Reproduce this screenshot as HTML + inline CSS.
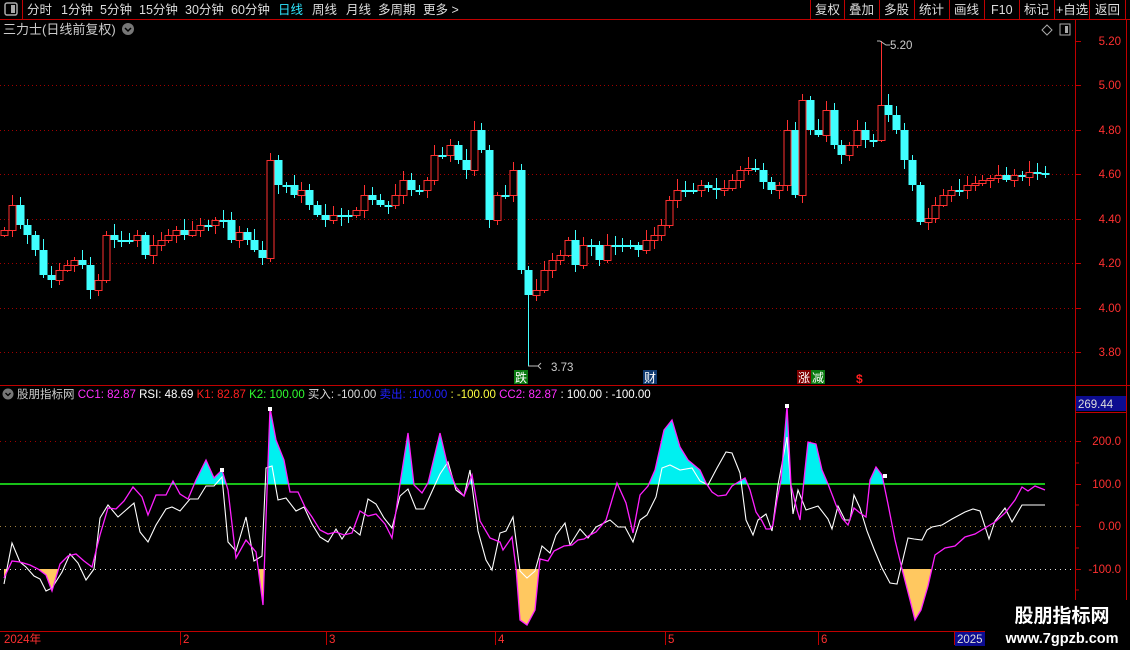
<!DOCTYPE html>
<html><head><meta charset="utf-8">
<style>
html,body{margin:0;padding:0;background:#000;width:1130px;height:650px;overflow:hidden;font-family:"Liberation Sans","Noto Sans CJK SC",sans-serif;}
svg{position:absolute;left:0;top:0}
</style></head>
<body>
<svg id="s" width="1130" height="650" xmlns="http://www.w3.org/2000/svg" font-family="Liberation Sans, Noto Sans CJK SC, sans-serif">
<defs>
<clipPath id="cu"><rect x="0" y="388" width="1075" height="96"/></clipPath>
<clipPath id="cd"><rect x="0" y="569" width="1075" height="62"/></clipPath>
</defs>
<rect width="1130" height="650" fill="#000"/>
<line x1="0" y1="19.5" x2="1130" y2="19.5" stroke="#c00000"/>
<line x1="22.5" y1="0" x2="22.5" y2="19" stroke="#c00000"/>
<rect x="5" y="3" width="12" height="12" rx="2" fill="none" stroke="#aaa" stroke-width="1.5"/>
<rect x="11" y="5" width="4" height="8" fill="#aaa"/>
<g font-size="12.5" fill="#ddd">
<text x="27" y="14">分时</text><text x="61" y="14">1分钟</text><text x="100" y="14">5分钟</text><text x="139" y="14">15分钟</text><text x="185" y="14">30分钟</text><text x="231" y="14">60分钟</text>
<text x="278" y="14" fill="#2ee6ff">日线</text><text x="312" y="14">周线</text><text x="346" y="14">月线</text><text x="378" y="14">多周期</text><text x="423" y="14">更多 &gt;</text>
</g>
<g stroke="#c00000"><line x1="810.5" y1="0" x2="810.5" y2="19"/><line x1="844.5" y1="0" x2="844.5" y2="19"/><line x1="879.5" y1="0" x2="879.5" y2="19"/><line x1="914.5" y1="0" x2="914.5" y2="19"/><line x1="949.5" y1="0" x2="949.5" y2="19"/><line x1="984.5" y1="0" x2="984.5" y2="19"/><line x1="1019.5" y1="0" x2="1019.5" y2="19"/><line x1="1054.5" y1="0" x2="1054.5" y2="19"/><line x1="1089.5" y1="0" x2="1089.5" y2="19"/><line x1="1125.5" y1="0" x2="1125.5" y2="19"/></g>
<g font-size="12.5" fill="#ddd"><text x="815" y="14">复权</text><text x="849" y="14">叠加</text><text x="884" y="14">多股</text><text x="919" y="14">统计</text><text x="954" y="14">画线</text><text x="991" y="14">F10</text><text x="1024" y="14">标记</text><text x="1056" y="14">+自选</text><text x="1095" y="14">返回</text></g>
<text x="3" y="34" font-size="13" fill="#ccc">三力士(日线前复权)</text>
<circle cx="128" cy="29" r="6" fill="#777"/><path d="M125 28l3 3 3-3" stroke="#000" stroke-width="1.5" fill="none"/>
<path d="M1047 25l5 5-5 5-5-5z" fill="none" stroke="#aaa"/>
<rect x="1060" y="24" width="10" height="11" fill="none" stroke="#aaa"/><rect x="1065" y="26" width="3" height="7" fill="#aaa"/>
<line x1="1075.5" y1="20" x2="1075.5" y2="650" stroke="#c00000"/>
<line x1="1126.5" y1="20" x2="1126.5" y2="631" stroke="#c00000"/>
<line x1="0" y1="385.5" x2="1130" y2="385.5" stroke="#c00000"/>
<line x1="0" y1="631.5" x2="1130" y2="631.5" stroke="#c00000"/>
<g id="grid" stroke="#a00000" stroke-dasharray="1 3"></g>
<g id="pl" font-size="11.5" fill="#ff3030" text-anchor="end"></g>
<g id="cd1"></g>
<path d="M538 366h-10M538 366l3-3M538 366l3 3" stroke="#bbb"/><text x="551" y="371" font-size="11.5" fill="#ccc">3.73</text>
<path d="M877 41h3l6 4h4" stroke="#bbb" fill="none"/><text x="890" y="49" font-size="11.5" fill="#ccc">5.20</text>
<rect x="514" y="370" width="14" height="14" fill="#0a7a10"/><text x="515" y="382" font-size="12" fill="#fff">跌</text>
<rect x="643" y="370" width="14" height="14" fill="#103a70"/><text x="644" y="382" font-size="12" fill="#fff">财</text>
<rect x="797" y="370" width="14" height="14" fill="#800000"/><text x="798" y="382" font-size="12" fill="#fff">涨</text>
<rect x="811" y="370" width="14" height="14" fill="#0a7a10"/><text x="812" y="382" font-size="12" fill="#fff">减</text>
<text x="856" y="383" font-size="12" fill="#ff2020" font-weight="bold">$</text>
<circle cx="8" cy="394" r="5.5" fill="#777"/><path d="M5.5 393l2.5 2.5 2.5-2.5" stroke="#000" stroke-width="1.3" fill="none"/>
<text x="17" y="398" font-size="11.5" fill="#ccc" xml:space="preserve">股朋指标网 <tspan fill="#ff30ff">CC1: 82.87</tspan> <tspan fill="#fff">RSI: 48.69</tspan> <tspan fill="#ff2020">K1: 82.87</tspan> <tspan fill="#30ff30">K2: 100.00</tspan> <tspan fill="#ddd">买入: -100.00</tspan> <tspan fill="#2020ff">卖出: :100.00</tspan> <tspan fill="#ffff40">: -100.00</tspan> <tspan fill="#ff30ff">CC2: 82.87</tspan> <tspan fill="#fff">: 100.00</tspan> <tspan fill="#fff">: -100.00</tspan></text>
<rect x="1076" y="396" width="50" height="15" fill="#0c0c90"/><text x="1078" y="408" font-size="11.5" fill="#ddd">269.44</text>
<line x1="1076" y1="412.5" x2="1126" y2="412.5" stroke="#c00000"/>
<g stroke-dasharray="1 4"><line x1="0" y1="441.5" x2="1075" y2="441.5" stroke="#a00000"/><line x1="0" y1="526.5" x2="1075" y2="526.5" stroke="#a08040"/><line x1="0" y1="569.5" x2="1075" y2="569.5" stroke="#ddd"/></g>
<line x1="0" y1="484" x2="1045" y2="484" stroke="#20ff20" stroke-width="1.5"/>
<g font-size="11.5" fill="#ff3030" text-anchor="end"><text x="1121" y="445">200.0</text><text x="1121" y="488">100.0</text><text x="1121" y="530">0.00</text><text x="1121" y="573">-100.0</text></g>
<g stroke="#c00000"><line x1="1076" y1="441.5" x2="1081" y2="441.5"/><line x1="1076" y1="484.5" x2="1081" y2="484.5"/><line x1="1076" y1="526.5" x2="1081" y2="526.5"/><line x1="1076" y1="569.5" x2="1081" y2="569.5"/><line x1="1076" y1="612.5" x2="1081" y2="612.5"/><line x1="1076" y1="463" x2="1079" y2="463"/><line x1="1076" y1="505" x2="1079" y2="505"/><line x1="1076" y1="548" x2="1079" y2="548"/><line x1="1076" y1="590" x2="1079" y2="590"/></g>
<g id="ind"></g>
<g stroke="#c00000"><line x1="180.5" y1="631" x2="180.5" y2="645"/><line x1="326.5" y1="631" x2="326.5" y2="645"/><line x1="495.5" y1="631" x2="495.5" y2="645"/><line x1="665.5" y1="631" x2="665.5" y2="645"/><line x1="818.5" y1="631" x2="818.5" y2="645"/><line x1="954.5" y1="631" x2="954.5" y2="645"/></g>
<g font-size="11.5" fill="#ff3030"><text x="4" y="643">2024年</text><text x="183" y="643">2</text><text x="329" y="643">3</text><text x="498" y="643">4</text><text x="668" y="643">5</text><text x="821" y="643">6</text></g>
<rect x="955" y="632" width="31" height="14" fill="#0c0c90"/><text x="957" y="643" font-size="11.5" fill="#ddd">2025</text>
<rect x="985" y="600" width="145" height="50" fill="#000"/>
<text x="1062" y="622" font-size="19" font-weight="bold" fill="#fff" text-anchor="middle">股朋指标网</text>
<text x="1062" y="643" font-size="14.5" fill="#fff" text-anchor="middle" font-weight="bold">www.7gpzb.com</text>
</svg>
<script>
(function(){
var NS="http://www.w3.org/2000/svg";
function el(t,a,p){var e=document.createElementNS(NS,t);for(var k in a)e.setAttribute(k,a[k]);document.getElementById(p).appendChild(e);return e;}
var levels=[[5.20,41],[5.00,85],[4.80,130],[4.60,174],[4.40,219],[4.20,263],[4.00,308],[3.80,352]];
levels.forEach(function(l){ if(l[0]<5.2) el('line',{x1:0,y1:l[1]+.5,x2:1075,y2:l[1]+.5},'grid');
 var t=el('text',{x:1121,y:l[1]+4},'pl');t.textContent=l[0].toFixed(2);
 el('line',{x1:1076,y1:l[1]+.5,x2:1081,y2:l[1]+.5,stroke:'#c00000'},'pl');});
var C=[230,205,225,235,250,275,280,270,265,260,265,290,280,235,240,240,240,235,255,245,240,235,230,235,230,225,225,220,220,240,232,240,250,258,160,185,185,195,190,205,215,220,215,215,215,210,195,200,205,205,195,180,190,190,180,155,155,145,160,170,130,150,220,195,195,170,270,295,290,270,260,255,240,265,245,245,260,245,245,245,245,250,240,235,225,200,190,190,190,185,188,190,188,180,170,168,170,182,190,185,130,195,100,130,135,110,145,155,145,130,140,140,105,115,130,160,185,222,218,205,195,190,190,185,183,180,178,175,180,175,177,172,173,173];
var n=C.length,dx=(1045-4)/(n-1),prev=235;
for(var i=0;i<n;i++){var x=Math.round(4+i*dx),c=C[i],o=prev;
 var up=c<o,tp=Math.min(o,c),bt=Math.max(o,c);if(bt-tp<2){bt=tp+2;}
 var hi=tp-3-(i*7%9),lo=bt+2+(i*5%8);
 if(i==67)lo=366; if(i==112)hi=41;
 var col=up?'#ff3030':'#40ffff';
 el('line',{x1:x+.5,y1:hi,x2:x+.5,y2:lo,stroke:col},'cd1');
 if(up) el('rect',{x:x-3,y:tp+.5,width:7,height:bt-tp,fill:'#000',stroke:col},'cd1');
 else el('rect',{x:x-3.5,y:tp,width:8,height:bt-tp,fill:col},'cd1');
 prev=c;}
function pr(a){var r=[];for(var i=0;i<a.length;i+=2)r.push([a[i],a[i+1]]);return r;}
var M=pr([4,578,12,561,20,562,30,565,38,569,46,575,52,591,60,564,68,556,76,554,84,561,92,567,100,535,108,508,116,509,124,501,133,487,142,497,148,515,156,495,166,495,173,481,180,494,188,499,196,480,206,460,214,478,222,470,228,490,236,558,246,540,256,552,263,605,266,519,270,408,276,440,284,460,290,492,298,492,305,507,312,517,320,530,328,534,336,532,344,535,352,533,360,511,368,516,376,514,385,524,392,538,400,484,408,433,414,485,422,493,428,483,440,433,448,467,456,487,464,496,472,475,480,521,490,538,500,542,503,550,512,537,516,568,520,620,527,625,535,610,540,559,548,561,554,551,564,546,572,545,578,540,584,539,590,535,596,532,606,520,617,483,626,503,633,533,640,495,648,486,655,470,664,430,672,420,680,447,688,460,700,470,706,483,712,492,718,496,726,495,732,486,740,481,745,478,750,490,756,512,762,521,766,529,770,529,773,525,777,500,781,480,787,406,791,485,797,510,800,520,805,470,808,442,816,444,822,470,828,484,833,497,836,505,842,518,848,525,854,508,860,513,866,517,870,480,876,467,882,475,888,504,895,540,902,569,910,600,915,620,921,610,928,586,935,555,945,548,955,546,965,537,975,534,985,528,995,522,1005,513,1015,500,1022,487,1028,491,1035,486,1045,490]);
var W=pr([4,584,12,543,20,562,26,567,34,576,40,579,46,591,52,588,62,572,70,554,78,563,86,580,94,569,100,518,108,505,118,517,126,510,134,503,140,532,148,542,156,525,166,509,172,507,180,511,190,499,198,499,206,486,214,486,222,477,228,542,236,551,246,517,254,561,262,556,266,468,272,466,278,500,286,498,296,511,304,507,312,524,320,537,328,542,336,529,342,539,350,527,360,535,368,499,376,504,384,518,392,528,400,496,408,489,416,509,424,509,434,487,440,474,448,462,456,490,464,496,470,470,478,531,486,560,492,570,500,533,506,531,513,517,520,571,527,578,535,571,542,546,550,553,556,535,565,523,570,545,580,529,588,538,596,527,604,523,610,520,618,527,625,527,633,542,640,520,647,515,656,497,662,468,670,465,680,470,692,468,700,481,708,485,717,468,726,452,732,453,740,473,746,520,753,535,758,520,766,514,772,531,778,485,787,437,793,514,798,490,806,510,812,508,818,506,828,519,832,529,838,506,845,520,850,520,854,495,860,508,867,531,874,549,882,568,890,583,897,584,908,538,914,539,922,540,927,530,932,527,942,525,952,519,965,512,973,509,980,511,989,539,995,521,1005,508,1012,522,1022,505,1035,505,1045,505]);
function ps(a){return a.map(function(p){return p[0].toFixed(1)+','+p[1].toFixed(1);}).join(' ');}
var last=M[M.length-1][0];
el('polygon',{points:ps(M)+' '+last+',484 4,484',fill:'#00f0f0','clip-path':'url(#cu)'},'ind');
el('polygon',{points:ps(M)+' '+last+',569 4,569',fill:'#ffc860','clip-path':'url(#cd)'},'ind');
el('polyline',{points:ps(W),fill:'none',stroke:'#fff','stroke-width':1.1},'ind');
el('polyline',{points:ps(M),fill:'none',stroke:'#ff20ff','stroke-width':1.3},'ind');
[[270,409],[222,470],[787,406],[885,476]].forEach(function(p){el('rect',{x:p[0]-2,y:p[1]-2,width:4,height:4,fill:'#fff'},'ind');});
})();
</script>
</body></html>
